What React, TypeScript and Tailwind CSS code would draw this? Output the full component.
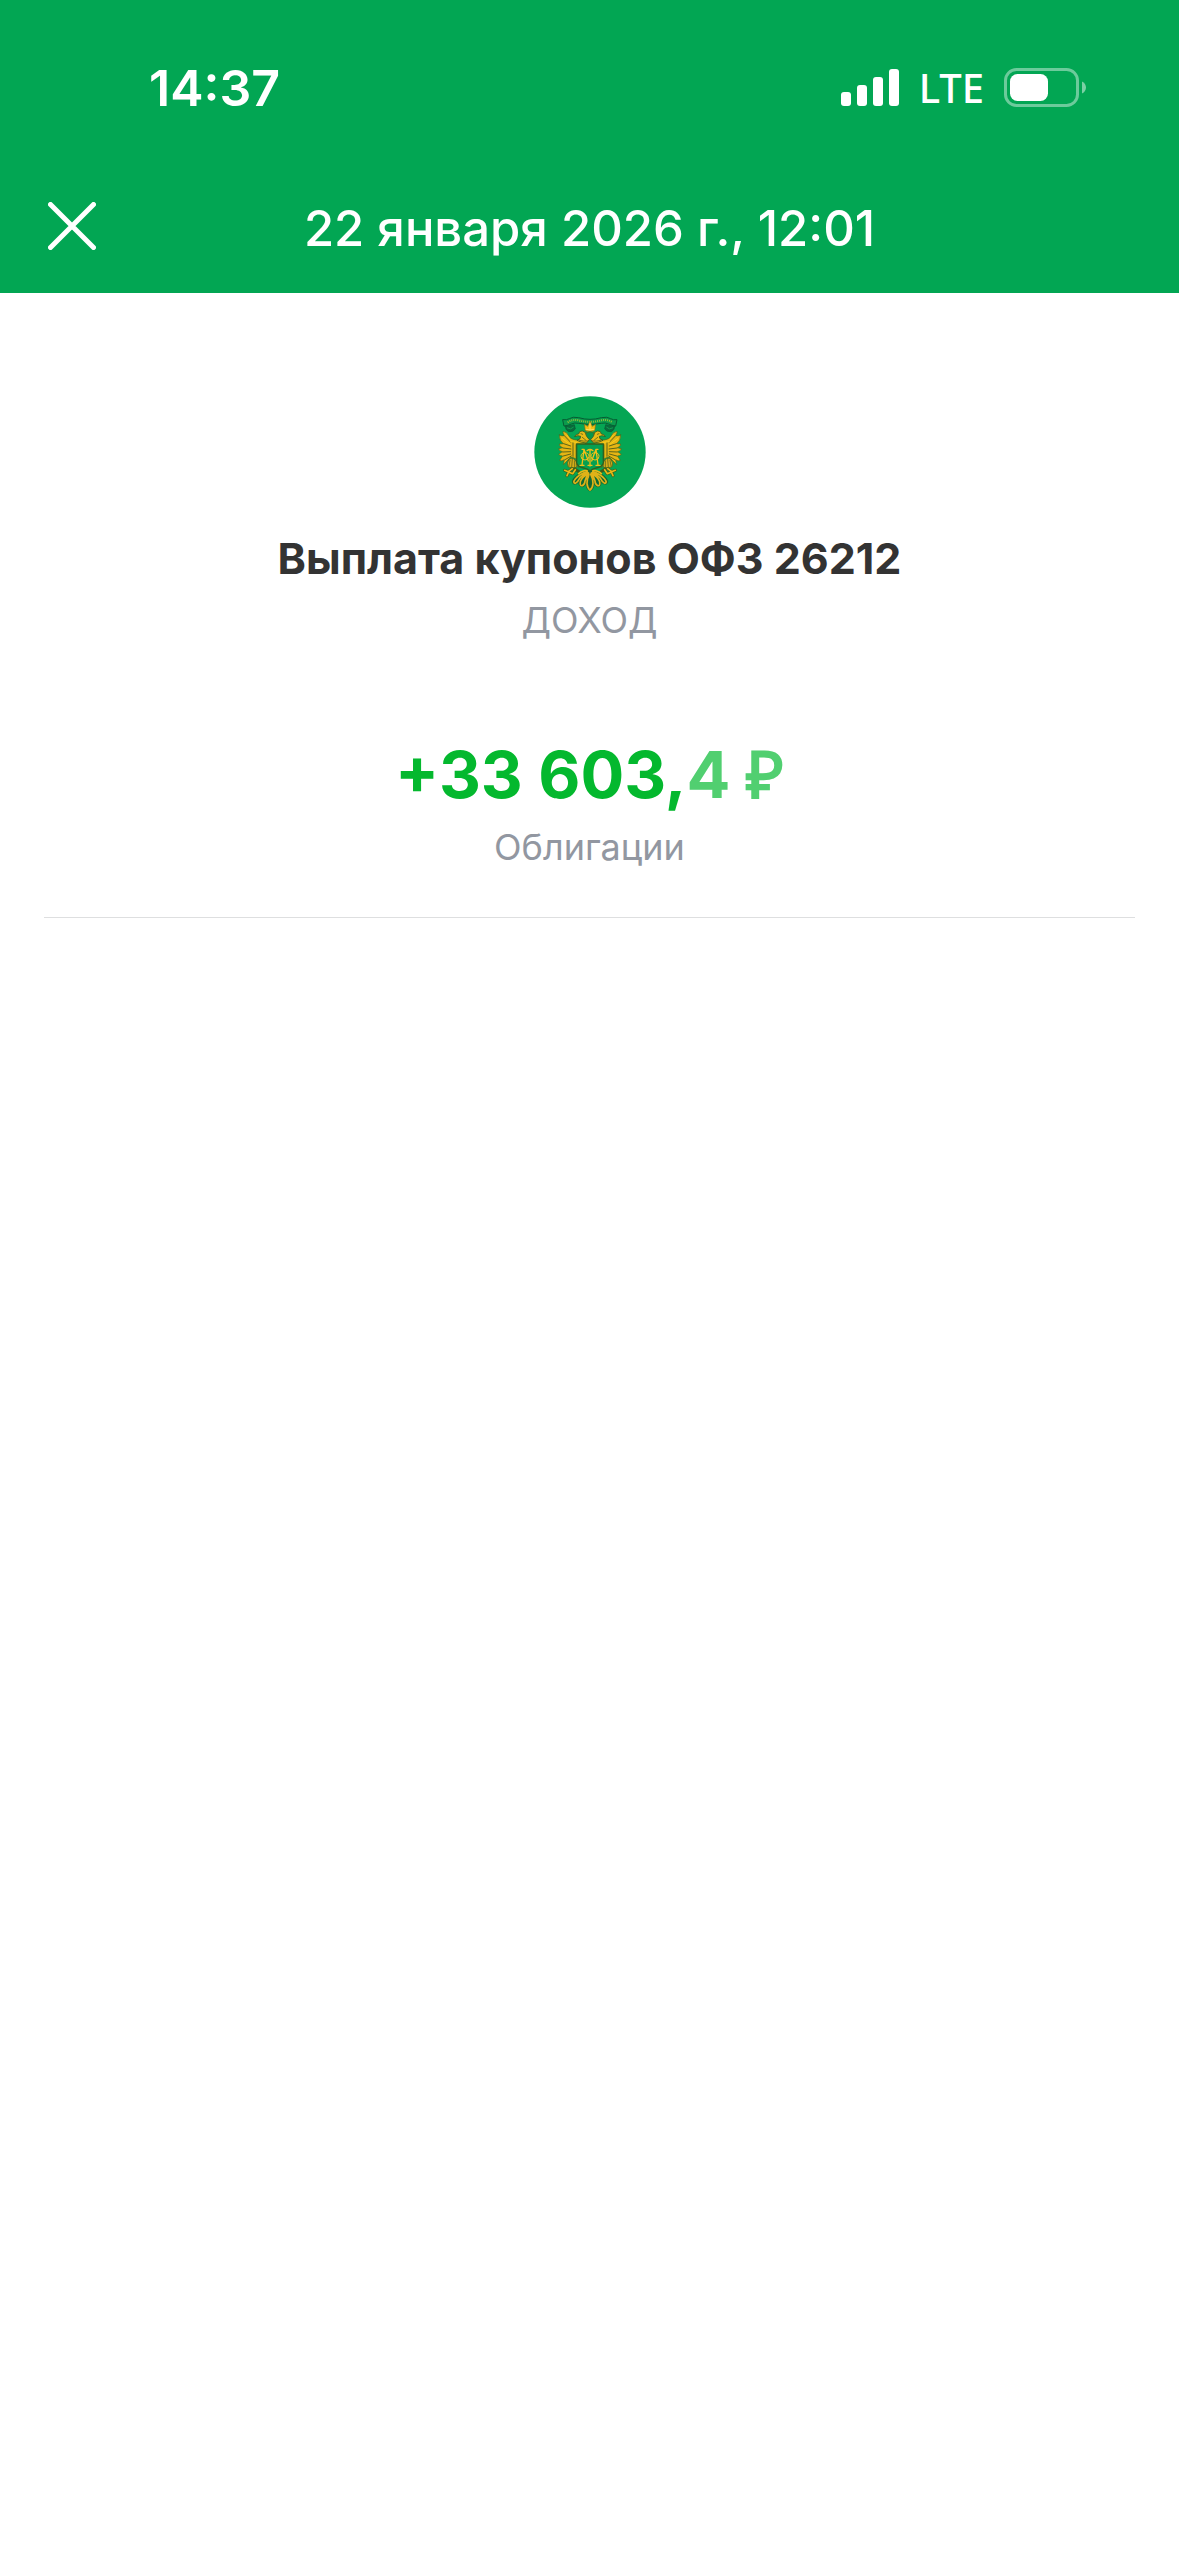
import type { ReactNode } from 'react';

function SignalIcon() {
  return (
    <svg className="h-[37px] w-[58px]" viewBox="0 0 58 37" fill="#fff" aria-hidden="true">
      <rect x="0" y="23" width="10" height="14" rx="3" />
      <rect x="16" y="16" width="10" height="21" rx="3" />
      <rect x="32" y="8" width="10" height="29" rx="3" />
      <rect x="48" y="0" width="10" height="37" rx="3" />
    </svg>
  );
}

function BatteryIcon() {
  return (
    <svg className="h-[39px] w-[82px]" viewBox="0 0 82 39" fill="none" aria-hidden="true">
      <rect x="1.5" y="1.5" width="72" height="36" rx="11" stroke="#fff" strokeOpacity="0.42" strokeWidth="3" />
      <rect x="6" y="6" width="38" height="27" rx="7.5" fill="#fff" />
      <path d="M78 13.5C80.5 14.7 82 17 82 19.5S80.500 24.300 78 25.500Z" fill="#fff" fillOpacity="0.48" />
    </svg>
  );
}

function CloseIcon() {
  return (
    <svg className="size-12" viewBox="0 0 48 48" fill="none" stroke="#fff" strokeWidth="5" strokeLinecap="round" aria-hidden="true">
      <path d="M2.500 2.500 45.500 45.500M45.500 2.500 2.500 45.500" />
    </svg>
  );
}

function Mirror({ children }: { children: ReactNode }) {
  return (
    <>
      {children}
      <g transform="translate(420 0) scale(-1 1)">{children}</g>
    </>
  );
}

function EmblemIcon() {
  return (
    <svg className="size-28" viewBox="42 33 336 336" role="img" aria-label="Герб">
      <circle cx="210" cy="201" r="167" fill="#05a654" />
      <g strokeLinejoin="round" strokeLinecap="round">
        {/* ribbon */}
        <path d="M129 104Q140 106 148 101Q158 94 176 98Q210 108 244 98Q262 94 272 101Q280 106 291 104L287 123Q276 122 266 117Q256 112 244 115Q210 123 176 115Q164 112 154 117Q144 122 133 123Z" fill="#0b9a4c" stroke="#075c33" strokeWidth="3" />
        <path d="M143 112Q158 102 176 106Q210 115 244 106Q262 102 277 112" fill="none" stroke="#8fbf3a" strokeWidth="6" strokeDasharray="3 3" strokeLinecap="butt" />
        <Mirror>
          <path d="M136 124L163 119L166 132Q160 142 146 140Q136 136 136 124Z" fill="#0a6a3c" stroke="#075c33" strokeWidth="2" />
          <path d="M142 129Q152 136 160 127" fill="none" stroke="#0fa050" strokeWidth="3" />
          {/* wing */}
          <path d="M118 150Q126 154 133 152Q127 143 129 139Q140 140 146 152Q150 162 168 165L196 167V178H168V222Q160 216 152 217L130 239L133 224Q124 230 119 226L128 213Q119 213 116 208L127 200Q117 198 116 191L128 188Q117 184 118 177L130 176Q118 168 118 150Z" fill="#e6b614" stroke="#4b661c" strokeWidth="2" />
          <path d="M134 153L152 172M131 176L152 183M129 189L153 192M128 201L152 200M130 213L152 207M135 224L154 213M159 172V214" fill="none" stroke="#5d6418" strokeWidth="3" />
          <path d="M126 160L150 178M152 170L170 172M140 150L150 163" fill="none" stroke="#f8cf1c" strokeWidth="3" />
          {/* head and neck */}
          <path d="M165 154Q168 146 176 147Q177 137 187 138Q198 139 199 151L208 164L199 174Q183 173 171 166Q183 163 182 154Q174 150 165 154Z" fill="#e8ba16" stroke="#38591e" strokeWidth="2.500" />
          <path d="M183 146L188 148M187 157L198 166M178 166Q191 170 204 168" stroke="#62651a" strokeWidth="2.500" fill="none" />
          {/* leg and claws */}
          <path d="M146 224Q155 215 166 225Q174 234 170 247Q156 252 144 245Q139 235 146 224Z" fill="#d5ad18" stroke="#4b661c" strokeWidth="2.500" />
          <path d="M150 226L147 242M157 223L155 246M164 227V246M170 238L176 248" fill="none" stroke="#65691a" strokeWidth="2.500" />
          <path d="M134 256L145 260L157 251M146 261L141 272M146 261L158 266L166 254M164 252L177 260" fill="none" stroke="#3b5e1b" strokeWidth="9" />
          <path d="M134 256L145 260L157 251M146 261L141 272M146 261L158 266L166 254" fill="none" stroke="#e9b916" strokeWidth="5" />
          {/* tail */}
          <path d="M204 257Q184 257 165 275Q152 288 160 297Q170 301 176 290Q175 303 186 306Q196 304 198 294Q198 314 210 318V257Z" fill="#0c6a35" stroke="#2c5c22" strokeWidth="2" />
          <path d="M202 260Q180 266 166 282Q157 294 166 295Q174 290 179 280Q186 270 202 264M206 264Q186 276 181 290Q179 304 187 302Q195 298 195 288Q198 274 206 266M208 268Q200 282 201 296Q202 309 210 315" fill="none" stroke="#dfb218" strokeWidth="5" />
          <path d="M176 266Q186 256 202 256" fill="none" stroke="#e8b916" strokeWidth="5" />
        </Mirror>
        {/* crown */}
        <path d="M196 137L193 118L203 124L210 109L217 124L227 118L224 137Q210 142 196 137Z" fill="#f4bf12" stroke="#846d16" strokeWidth="2" />
        <path d="M198 133Q210 137 222 133M210 114V133" fill="none" stroke="#fff08a" strokeWidth="2" />
        <path d="M199 143Q210 138 221 143V152Q218 160 210 164Q202 160 199 152Z" fill="#08954c" stroke="#55671b" strokeWidth="2" />
        {/* shield with monogram */}
        <path d="M170 177H250V234Q245 247 229 249Q217 251 210 258Q203 251 191 249Q175 247 170 234Z" fill="#05a050" stroke="#31601e" strokeWidth="4" />
        <g fill="none" stroke="#f2bf18" strokeWidth="4">
          <path d="M180 241H192M186 240L192 193M192 193L205 228M240 241H228M234 240L228 193M228 193L215 228M186 193H192M234 193H228" />
          <path d="M210 193V243M201 197Q210 190 219 197M204 241H216" />
          <path d="M195 203Q183 203 183 214T195 225Q207 225 207 214T195 203ZM225 203Q237 203 237 214T225 225Q213 225 213 214T225 203Z" strokeWidth="3" />
        </g>
      </g>
    </svg>
  );
}

export default function App() {
  return (
    <div className="min-h-screen bg-white font-['Inter',sans-serif]">
      <header className="bg-[#02a653] text-white">
        <div className="flex h-[175px] items-center justify-between pr-[93px] pl-[149px]">
          <time className="text-[50px] leading-[52px] font-semibold">14:37</time>
          <div className="flex items-center gap-5">
            <SignalIcon />
            <span className="font-['Noto_Sans',sans-serif] text-[40px] leading-10 font-medium">LTE</span>
            <BatteryIcon />
          </div>
        </div>
        <div className="grid h-[118px] grid-cols-[72px_1fr_72px] items-start px-12">
          <button type="button" aria-label="Закрыть" className="mt-[27px] w-fit">
            <CloseIcon />
          </button>
          <h1 className="mt-[26px] text-center text-[49px] leading-[56px] font-medium">22 января 2026 г., 12:01</h1>
        </div>
      </header>

      <main className="mx-11 flex flex-col items-center border-b border-[#dedfe0] pt-[103px] pb-[46px] text-center">
        <EmblemIcon />
        <h2 className="mt-[22px] text-[43px] leading-[56px] font-bold text-[#333333]">Выплата купонов ОФЗ 26212</h2>
        <p className="mt-[10px] text-[36px] leading-12 text-[#9297a1]">ДОХОД</p>
        <p className="mt-[91px] text-[65px] leading-20 font-bold text-[#04b82e]">
          +33 603,
          <span className="text-[#51cf70]">
            4 <span className="font-['Liberation_Sans',sans-serif] leading-none">₽</span>
          </span>
        </p>
        <p className="mt-2 text-[36px] leading-12 text-[#9297a1]">Облигации</p>
      </main>
    </div>
  );
}
